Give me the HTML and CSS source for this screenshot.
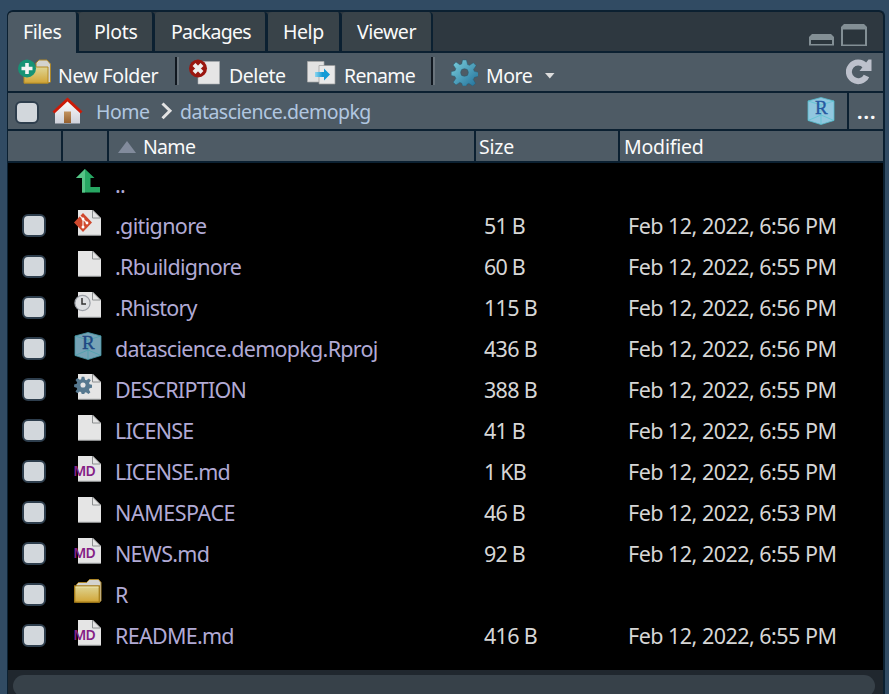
FILE: index.html
```html
<!DOCTYPE html>
<html lang="en">
<head>
<meta charset="utf-8">
<title>Files</title>
<link rel="stylesheet" href="styles.css">
</head>
<body>
<svg class="defs" aria-hidden="true">
  <defs>
    <linearGradient id="gold" x1="0" y1="0" x2="0" y2="1"><stop offset="0" stop-color="#ded594"/><stop offset="1" stop-color="#d2a536"/></linearGradient>
    <linearGradient id="teal" x1="0" y1="0" x2="1" y2="1"><stop offset="0" stop-color="#7dd0dc"/><stop offset="1" stop-color="#206f9a"/></linearGradient>
    <linearGradient id="arrow" x1="0" y1="0" x2="1" y2="0"><stop offset="0" stop-color="#8ed5ee"/><stop offset=".5" stop-color="#149bd6"/></linearGradient>
    <linearGradient id="door" x1="0" y1="0" x2="0" y2="1"><stop offset="0" stop-color="#c29360"/><stop offset="1" stop-color="#96602f"/></linearGradient>
    <linearGradient id="wall" x1="0" y1="0" x2="0" y2="1"><stop offset="0" stop-color="#fff"/><stop offset="1" stop-color="#cfd1da"/></linearGradient>
  </defs>
  <symbol id="page" viewBox="0 0 28 28">
    <path d="M4 1h15l8 8v17.500H4z" fill="#e5e5e5"/><path d="M19 1.500l7.500 7.500" stroke="#777" stroke-width=".6"/>
    <path d="M18.500 1v8h8M4.500 26.300h22" fill="none" stroke="#8c8f90" stroke-width="1"/>
  </symbol>
  <symbol id="folder" viewBox="0 0 28 28">
    <path d="M2.500 24V6.500l2-2h8l3-3h9l2.500 3V23l-2 1z" fill="#d3d3cf" stroke="#ac8629"/>
    <path d="M.7 8h24.600v16.200H.7z" fill="url(#gold)" stroke="#a57c19" stroke-width="1.300"/>
    <path d="M1.500 9h23" stroke="#eee6b0"/>
  </symbol>
  <symbol id="gear" viewBox="-14 -14 28 28">
    <path fill-rule="evenodd" d="M-2-13h4l1.200 4.800 2 .8 4-2.700 2.900 2.900-2.700 4 .8 2 4.600 1.100v4L10.300 5l-.9 2-.2.400 2.300 3.700-2.900 2.900-4-2.700-1.900.800L2 14h-4l-.9-2.900-1.900-.8-4 2.700-2.900-2.900 2.700-4-.9-2-3.900-1v-4l4-1 .8-2-2.700-4 2.900-2.900 4 2.700 1.900-.8zM4 0a4 4 0 1 0-8 0 4 4 0 0 0 8 0z"/>
  </symbol>
  <symbol id="cube" viewBox="0 0 28 28">
    <path d="M14 .5L27 4v19.500l-13 4L1 23.500V4z" class="cube-face"/>
    <path d="M1 4l13 4 13-4M1 23.500l13-5.500 13 5.500M14 8v19" fill="none" stroke="#55c4d0" stroke-width=".7"/>
  </symbol>
</svg>

<main class="panel">
  <nav class="tabs">
    <div class="tab active">Files</div><div class="tab plots">Plots</div><div class="tab packages">Packages</div><div class="tab help">Help</div><div class="tab viewer">Viewer</div>
    <div class="window-tools">
      <svg width="25" height="12"><path d="M0 11.500V3l3-3h19l3 3v8.500z" fill="#838f95"/><path d="M2 6h21v4H2z" fill="#2b353c"/></svg>
      <svg width="26" height="22"><path d="M0 22V3l3-3h20l3 3v19z" fill="#838f95"/><path d="M2 5.500h22v15H2z" fill="#2b353c"/></svg>
    </div>
  </nav>

  <div class="toolbar">
    <svg class="tool-icon new" width="34" height="26" viewBox="0 0 34 26">
      <path d="M18 8v-4l3-3h8l3.500 4v18l-2 1z" fill="#d3d3cf" stroke="#ac8629"/>
      <path d="M6 8h24v16.200H6z" fill="url(#gold)" stroke="#b48b25"/>
      <circle cx="9" cy="9.500" r="9" fill="#179375"/><path d="M9 4v11M3.500 9.500h11" stroke="#f4f4f4" stroke-width="3.600"/>
    </svg>
    <span class="tool-label l-new">New Folder</span>
    <i class="separator s1"></i>
    <svg class="tool-icon delete" width="32" height="26" viewBox="0 0 32 26">
      <path d="M9 2.500h21.500V25H9z" fill="#e5e5e5" stroke="#a9adae" stroke-width=".6"/>
      <circle cx="9" cy="9.500" r="9" fill="#9a160f"/><path d="M5 5.500l8 8M13 5.500l-8 8" stroke="#eee" stroke-width="4"/>
    </svg>
    <span class="tool-label l-delete">Delete</span>
    <svg class="tool-icon rename" width="29" height="24" viewBox="0 0 29 24">
      <path d="M.5.500H17V21H.5z" fill="#e2e2e2" stroke="#aaa" stroke-width=".7"/>
      <path d="M12 4.500h16V23H12z" fill="#e9e9e9" stroke="#999" stroke-width=".7"/>
      <path d="M8 11h9V7.500l6 6-6 6V16H8z" fill="url(#arrow)"/>
    </svg>
    <span class="tool-label l-rename">Rename</span>
    <i class="separator s2"></i>
    <svg class="tool-icon more" width="27" height="27" fill="url(#teal)" stroke="#265d73" stroke-width=".5"><use href="#gear"/></svg>
    <span class="tool-label l-more">More</span>
    <svg class="caret" width="10" height="6"><path d="M0 0h9.500L4.800 5.500z" fill="#ddd"/></svg>
    <svg class="refresh" width="26" height="28" viewBox="0 0 26 28"><path d="M20.500 18A9.300 9.300 0 1 1 19 7.500" fill="none" stroke="#bdc1cc" stroke-width="6"/><path d="M13.500 13h12V1.500h-3z" fill="#bdc1cc"/></svg>
  </div>

  <div class="path">
    <i class="checkbox"></i>
    <svg class="home" width="31" height="28" viewBox="0 0 31 28"><path d="M3 26.500V13L15.500 2 28 13v13.500z" fill="url(#wall)"/><path d="M12 14.500h7V26h-7z" fill="url(#door)"/><path d="M1.500 15.500L15.500 2.500l14 13" fill="none" stroke="#cc1b08" stroke-width="3"/></svg>
    <span class="crumb c-home">Home</span>
    <svg class="chevron" width="12" height="18"><path d="M1.500 1.500L9 8.800l-7.500 7.500" fill="none" stroke="#e3e3e3" stroke-width="3"/></svg>
    <span class="crumb c-dir">datascience.demopkg</span>
    <svg class="project" width="28" height="28"><use href="#cube"/><text x="14.300" y="17" class="cube-letter">R</text></svg>
    <div class="ellipsis">...</div>
  </div>

  <div class="columns">
    <div></div><div></div>
    <div class="col-name"><svg width="18" height="12"><path d="M9 0l9 12H0z" fill="#828b9c"/></svg><span class="h-name">Name</span></div>
    <div class="col-text h-size">Size</div><div class="col-text h-modified">Modified</div>
  </div>

  <div class="files">
    <div class="row up"><span></span><svg class="icon" viewBox="0 0 28 28"><path d="M11 1l9.500 9h-4v9H26v5.500H8V10H2z" fill="#27a763"/><path d="M11 1v23.500H8V10H2z" fill="#56c486"/></svg><span class="name n-up">..</span><span></span><span></span></div>
    <div class="row"><i class="checkbox"></i><svg class="icon" viewBox="0 0 28 28"><use href="#page"/><path d="M9 4l9 9.500L9 23 0 13.500z" fill="#d0492e"/><path d="M6 7l3 3v8M9 10l4 4" fill="none" stroke="#f7e7e2" stroke-width="1.200"/><circle cx="9" cy="18" r="1.500" fill="#fff"/><circle cx="13" cy="14" r="1.400" fill="#fff"/><circle cx="9" cy="10" r="1.400" fill="#fff"/></svg><span class="name n-git">.gitignore</span><span class="size">51 B</span><span class="date">Feb 12, 2022, 6:56 PM</span></div>
    <div class="row"><i class="checkbox"></i><svg class="icon"><use href="#page"/></svg><span class="name n-build">.Rbuildignore</span><span class="size">60 B</span><span class="date">Feb 12, 2022, 6:55 PM</span></div>
    <div class="row"><i class="checkbox"></i><svg class="icon" viewBox="0 0 28 28"><use href="#page"/><circle cx="8.500" cy="12" r="7.600" fill="#dddfe2" stroke="#9b9fa6" stroke-width="1.200"/><path d="M8 7v6h4" fill="none" stroke="#333" stroke-width="1.500"/></svg><span class="name n-history">.Rhistory</span><span class="size wide">115 B</span><span class="date">Feb 12, 2022, 6:56 PM</span></div>
    <div class="row"><i class="checkbox"></i><svg class="icon dim"><use href="#cube"/><text x="14.300" y="17" class="cube-letter">R</text></svg><span class="name n-proj">datascience.demopkg.Rproj</span><span class="size wide">436 B</span><span class="date">Feb 12, 2022, 6:56 PM</span></div>
    <div class="row"><i class="checkbox"></i><svg class="icon" viewBox="0 0 28 28"><use href="#page"/><use href="#gear" x="0" y="3" width="18" height="18" fill="#56788f"/></svg><span class="name n-desc">DESCRIPTION</span><span class="size wide">388 B</span><span class="date">Feb 12, 2022, 6:55 PM</span></div>
    <div class="row"><i class="checkbox"></i><svg class="icon"><use href="#page"/></svg><span class="name n-license">LICENSE</span><span class="size">41 B</span><span class="date">Feb 12, 2022, 6:55 PM</span></div>
    <div class="row"><i class="checkbox"></i><svg class="icon" viewBox="0 0 28 28"><use href="#page"/><text x="-.7" y="21" class="md">MD</text></svg><span class="name n-licmd">LICENSE.md</span><span class="size">1 KB</span><span class="date">Feb 12, 2022, 6:55 PM</span></div>
    <div class="row"><i class="checkbox"></i><svg class="icon"><use href="#page"/></svg><span class="name n-namespace">NAMESPACE</span><span class="size">46 B</span><span class="date">Feb 12, 2022, 6:53 PM</span></div>
    <div class="row"><i class="checkbox"></i><svg class="icon" viewBox="0 0 28 28"><use href="#page"/><text x="-.7" y="21" class="md">MD</text></svg><span class="name n-news">NEWS.md</span><span class="size">92 B</span><span class="date">Feb 12, 2022, 6:55 PM</span></div>
    <div class="row"><i class="checkbox"></i><svg class="icon"><use href="#folder"/></svg><span class="name n-r">R</span><span></span><span></span></div>
    <div class="row"><i class="checkbox"></i><svg class="icon" viewBox="0 0 28 28"><use href="#page"/><text x="-.7" y="21" class="md">MD</text></svg><span class="name n-readme">README.md</span><span class="size wide">416 B</span><span class="date">Feb 12, 2022, 6:55 PM</span></div>
  </div>
  <div class="scrollbar"><div class="thumb"></div></div>
</main>
</body>
</html>
```

FILE: styles.css
```css
* { box-sizing: border-box; }
body { margin: 0; height: 694px; padding: 10px 4px 0 7px; overflow: hidden; background: #314b63; font-family: "Noto Sans", sans-serif; font-size: 19.5px; color: #fafafa; white-space: nowrap; }
.defs { position: absolute; width: 0; height: 0; }
svg { display: block; flex: none; }
.panel { height: 684px; border: solid #0b2031; border-width: 2px 2px 0 1px; border-radius: 6px 6px 0 0; overflow: hidden; background: #000; }
.tabs { display: flex; height: 41px; background: #2e3840; border-bottom: 2px solid #0b2031; }
.tab { height: 39px; padding: 0 0 0 15px; line-height: 40px; background: #394349; border-right: 3px solid #0b2031; border-radius: 4px 4px 0 0; width: 76px; letter-spacing: -.45px; }
.tab.active { width: 71px; height: 41px; background: #4e5b65; }
.tab.plots { letter-spacing: -.3px; }
.tab.packages { width: 113px; padding-left: 16px; letter-spacing: -.75px; }
.tab.help { width: 74px; }
.tab.viewer { width: 91px; border-right-width: 2px; }
.window-tools { display: flex; align-items: flex-end; gap: 7px; margin-left: auto; padding: 0 16px 5px 0; }

.toolbar { display: flex; align-items: center; height: 40px; padding: 4px 11px 0 10px; background: #4e5b65; border-bottom: 2px solid #0b2031; }
.tool-icon { margin-top: -4px; }
.tool-label { flex: none; padding-top: 4px; letter-spacing: -.45px; line-height: 30px; }
.l-new { margin-left: 6px; width: 117px; letter-spacing: -.35px; }
.separator { flex: none; width: 4px; height: 28px; margin-top: -7px; background: linear-gradient(to right, #111820 50%, #6a747c 50%); }
.tool-icon.delete { margin-left: 10px; }
.l-delete { margin-left: 8px; width: 78px; }
.l-rename { margin-left: 8px; width: 87px; letter-spacing: -.7px; }
.tool-icon.rename { margin-top: -2px; }
.more { margin-left: 16px; }
.l-more { margin-left: 8px; width: 59px; }
.caret { margin-top: 3px; }
.refresh { margin: -5px 0 0 auto; }

.path { display: flex; align-items: center; height: 38px; padding-left: 7px; background: #4e5b65; border-bottom: 2px solid #0b2031; }
.checkbox { display: block; width: 24px; height: 23px; border: 2px solid #2e3e4d; border-radius: 6px; background: #d2d7dc; }
.path .checkbox { margin-top: 2px; }
.home { margin-left: 13px; }
.crumb { color: #b1c7e0; }
.c-home { margin-left: 13px; width: 65px; letter-spacing: -.5px; }
.c-dir { margin-left: 7px; letter-spacing: -.52px; }
.project { margin-left: auto; }
.ellipsis { width: 36px; height: 36px; margin-left: 12px; padding-left: 8px; border-left: 2px solid #0b2031; line-height: 37px; font-weight: 700; letter-spacing: 1px; }
.cube-face { fill: #91c7df; stroke: #55b9c9; stroke-width: .8px; }
.dim { opacity: .82; }
.cube-letter { font: 19px "Liberation Serif", serif; fill: #2758a0; stroke: #2758a0; stroke-width: .4px; text-anchor: middle; }

.columns { display: grid; grid-template-columns: 55px 46px 367px 144px 1fr; height: 32px; border-bottom: 2px solid #0b2031; background: #4e5b65; line-height: 32px; }
.columns > div:not(:last-child) { border-right: 2px solid #0b2031; }
.col-name { display: flex; align-items: center; gap: 7px; padding-left: 9px; }
.h-name { letter-spacing: -.7px; }
.h-size { padding-left: 3px; letter-spacing: -.2px; }
.h-modified { padding-left: 4px; letter-spacing: -.2px; }

.files { height: 507px; padding-top: 1px; }
.row { display: grid; grid-template-columns: 52px 41px 369px 144px 1fr; align-items: center; height: 41px; padding-left: 14px; font-size: 21.5px; line-height: 40px; color: #d6d6d6; }
.icon { width: 28px; height: 28px; margin-top: -6px; }
.name { color: #b1aad5; letter-spacing: -.72px; }
.n-git { letter-spacing: -.65px; }
.n-license, .n-licmd { letter-spacing: -.85px; }
.n-history { letter-spacing: -.8px; }
.n-namespace { letter-spacing: -.45px; }
.size { letter-spacing: -.8px; }
.size.wide { letter-spacing: -.7px; }
.date { letter-spacing: -.52px; }
.md { font: 600 14px "Noto Sans", sans-serif; letter-spacing: -.8px; fill: #842085; }
.scrollbar { height: 24px; padding: 5px 8px 0 5px; background: #20272e; }
.thumb { height: 22px; border-radius: 11px; background: #374149; }
```
